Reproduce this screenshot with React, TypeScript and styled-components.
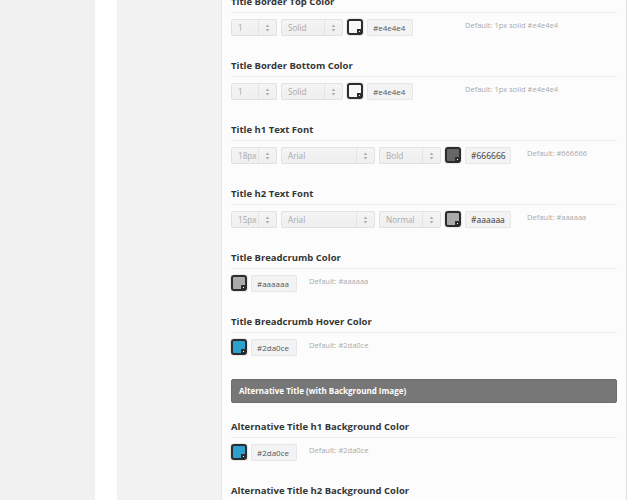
import React from "react";
import styled, { createGlobalStyle } from "styled-components";

const Global = createGlobalStyle`
  html, body { margin: 0; padding: 0; background: #ffffff; }
  body { font-family: "Open Sans", "Liberation Sans", Arial, sans-serif; }
  * { box-sizing: border-box; }
`;

const Page = styled.div`
  display: flex;
  height: 500px;
  width: 640px;
  overflow: hidden;
  background: #ffffff;
`;

const OuterGutter = styled.div`
  width: 95px;
  flex: none;
  background: #f1f1f1;
`;

const WhiteStrip = styled.div`
  width: 22px;
  flex: none;
  background: #ffffff;
`;

const SideColumn = styled.div`
  width: 105px;
  flex: none;
  background: #f2f2f2;
  border-right: 1px solid #e6e6e6;
`;

const Panel = styled.div`
  width: 405px;
  flex: none;
  background: #fcfcfc;
  border-right: 1px solid #e3e3e3;
  padding: 0 9px;
`;

const List = styled.div`
  display: flex;
  flex-direction: column;
  margin-top: -5px;
`;

const Section = styled.section`
  display: flex;
  flex-direction: column;
  margin-bottom: 23px;
`;

const Heading = styled.h3`
  margin: 0;
  font-size: 9.5px;
  line-height: 14px;
  font-weight: 700;
  color: #363636;
  padding-bottom: 3px;
  border-bottom: 1px solid #ebebeb;
`;

const Controls = styled.div<{ $gap: number }>`
  display: flex;
  align-items: flex-start;
  margin-top: 6px;
  gap: 4px;
  & > p {
    margin-left: ${(p) => p.$gap - 4}px;
  }
`;

const SelectBox = styled.div<{ $w: number }>`
  width: ${(p) => p.$w}px;
  height: 17px;
  display: flex;
  align-items: stretch;
  background: linear-gradient(#f4f4f4, #efefef);
  border: 1px solid #e2e2e2;
  border-radius: 2px;
  color: #a8a8a8;
  font-size: 8.2px;
`;

const SelectLabel = styled.span`
  flex: 1;
  padding-left: 6px;
  line-height: 15px;
`;

const SelectArrow = styled.span`
  width: 18px;
  flex: none;
  display: flex;
  align-items: center;
  justify-content: center;
  border-left: 1px solid #e4e4e4;
`;

const Swatch = styled.span<{ $fill: string }>`
  position: relative;
  width: 16px;
  height: 16px;
  flex: none;
  border: 2px solid #2c2c2c;
  border-radius: 3px;
  background: ${(p) => p.$fill};
  box-shadow: 0 0 0 1px rgba(0, 0, 0, 0.08);
  &::after {
    content: "";
    position: absolute;
    right: 0;
    bottom: 0;
    width: 4px;
    height: 4px;
    background: #2c2c2c;
  }
  &::before {
    content: "";
    position: absolute;
    right: 1px;
    bottom: 1px;
    width: 1.5px;
    height: 1.5px;
    background: #ffffff;
    z-index: 1;
  }
`;

const HexInput = styled.div<{ $dark?: boolean }>`
  width: 46px;
  height: 17px;
  background: #f3f3f3;
  border: 1px solid #e6e6e6;
  border-radius: 2px;
  padding-left: 5px;
  line-height: 15px;
  font-size: ${(p) => (p.$dark ? "8.5px" : "8px")};
  color: ${(p) => (p.$dark ? "#333333" : "#555555")};
  white-space: nowrap;
`;

const Default = styled.p`
  margin: 1px 0 0 0;
  font-size: 7.5px;
  line-height: 11px;
  color: #aaaaaa;
  white-space: nowrap;
`;

const GroupBar = styled.div`
  height: 24px;
  margin-bottom: 17px;
  background: #777777;
  border: 1px solid #6c6c6c;
  border-radius: 2px;
  color: #ffffff;
  font-size: 8px;
  font-weight: 700;
  line-height: 22px;
  padding-left: 7px;
`;

const Arrows = () => (
  <svg width="5" height="8" viewBox="0 0 5 8">
    <path d="M2.5 0.5 L4.5 3 L0.5 3 Z" fill="#b0b0b0" />
    <path d="M2.5 7.5 L4.5 5 L0.5 5 Z" fill="#b0b0b0" />
  </svg>
);

type Sel = { label: string; w: number };

type Row = {
  title: string;
  selects?: Sel[];
  fill: string;
  hex: string;
  dark?: boolean;
  def: string;
  gap: number;
};

const Setting = ({ row }: { row: Row }) => (
  <Section>
    <Heading>{row.title}</Heading>
    <Controls $gap={row.gap}>
      {row.selects?.map((s, i) => (
        <SelectBox key={i} $w={s.w}>
          <SelectLabel>{s.label}</SelectLabel>
          <SelectArrow>
            <Arrows />
          </SelectArrow>
        </SelectBox>
      ))}
      <Swatch $fill={row.fill} />
      <HexInput $dark={row.dark}>{row.hex}</HexInput>
      <Default>{row.def}</Default>
    </Controls>
  </Section>
);

const top: Row[] = [
  {
    title: "Title Border Top Color",
    selects: [
      { label: "1", w: 46 },
      { label: "Solid", w: 62 },
    ],
    fill: "#f7f7f7",
    hex: "#e4e4e4",
    def: "Default: 1px solid #e4e4e4",
    gap: 52,
  },
  {
    title: "Title Border Bottom Color",
    selects: [
      { label: "1", w: 46 },
      { label: "Solid", w: 62 },
    ],
    fill: "#f7f7f7",
    hex: "#e4e4e4",
    def: "Default: 1px solid #e4e4e4",
    gap: 52,
  },
  {
    title: "Title h1 Text Font",
    selects: [
      { label: "18px", w: 46 },
      { label: "Arial", w: 94 },
      { label: "Bold", w: 62 },
    ],
    fill: "#666666",
    hex: "#666666",
    dark: true,
    def: "Default: #666666",
    gap: 16,
  },
  {
    title: "Title h2 Text Font",
    selects: [
      { label: "15px", w: 46 },
      { label: "Arial", w: 94 },
      { label: "Normal", w: 62 },
    ],
    fill: "#aaaaaa",
    hex: "#aaaaaa",
    dark: true,
    def: "Default: #aaaaaa",
    gap: 16,
  },
  {
    title: "Title Breadcrumb Color",
    fill: "#aaaaaa",
    hex: "#aaaaaa",
    def: "Default: #aaaaaa",
    gap: 12,
  },
  {
    title: "Title Breadcrumb Hover Color",
    fill: "#2da0ce",
    hex: "#2da0ce",
    def: "Default: #2da0ce",
    gap: 12,
  },
];

const alt: Row[] = [
  {
    title: "Alternative Title h1 Background Color",
    fill: "#2da0ce",
    hex: "#2da0ce",
    def: "Default: #2da0ce",
    gap: 12,
  },
  {
    title: "Alternative Title h2 Background Color",
    fill: "#2da0ce",
    hex: "#2da0ce",
    def: "Default: #2da0ce",
    gap: 12,
  },
];

export default function App() {
  return (
    <>
      <Global />
      <Page>
        <OuterGutter />
        <WhiteStrip />
        <SideColumn />
        <Panel>
          <List>
            {top.map((r) => (
              <Setting key={r.title} row={r} />
            ))}
            <GroupBar>Alternative Title (with Background Image)</GroupBar>
            {alt.map((r) => (
              <Setting key={r.title} row={r} />
            ))}
          </List>
        </Panel>
      </Page>
    </>
  );
}
